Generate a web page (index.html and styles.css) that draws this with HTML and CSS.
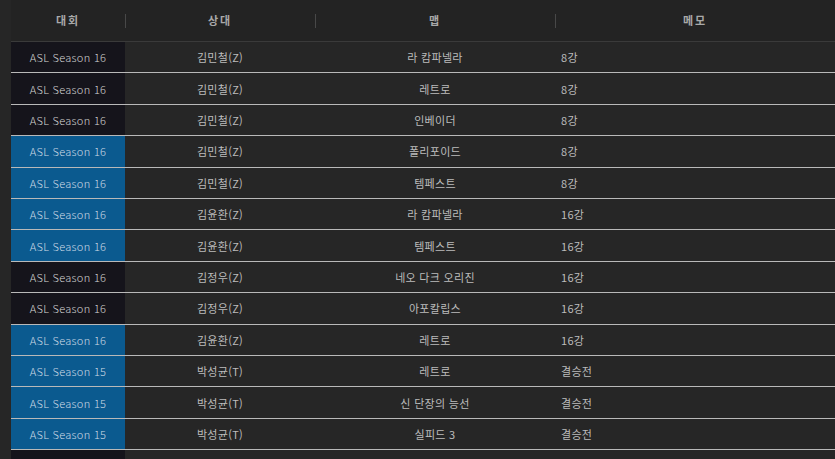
FILE: index.html
```html
<!DOCTYPE html>
<html lang="ko">
<head>
<meta charset="utf-8">
<link rel="stylesheet" href="styles.css">
</head>
<body>
<div class="wrap">
  <div class="thead">
    <div class="th">대회</div>
    <div class="th sep">상대</div>
    <div class="th sep">맵</div>
    <div class="th sep">메모</div>
  </div>
  <div class="row"><div class="c1 dark">ASL Season 16</div><div class="c">김민철(Z)</div><div class="c">라 캄파넬라</div><div class="c memo">8강</div></div>
  <div class="row"><div class="c1 dark">ASL Season 16</div><div class="c">김민철(Z)</div><div class="c">레트로</div><div class="c memo">8강</div></div>
  <div class="row"><div class="c1 dark">ASL Season 16</div><div class="c">김민철(Z)</div><div class="c">인베이더</div><div class="c memo">8강</div></div>
  <div class="row"><div class="c1 blue">ASL Season 16</div><div class="c">김민철(Z)</div><div class="c">폴리포이드</div><div class="c memo">8강</div></div>
  <div class="row"><div class="c1 blue">ASL Season 16</div><div class="c">김민철(Z)</div><div class="c">템페스트</div><div class="c memo">8강</div></div>
  <div class="row"><div class="c1 blue">ASL Season 16</div><div class="c">김윤환(Z)</div><div class="c">라 캄파넬라</div><div class="c memo">16강</div></div>
  <div class="row"><div class="c1 blue">ASL Season 16</div><div class="c">김윤환(Z)</div><div class="c">템페스트</div><div class="c memo">16강</div></div>
  <div class="row"><div class="c1 dark">ASL Season 16</div><div class="c">김정우(Z)</div><div class="c">네오 다크 오리진</div><div class="c memo">16강</div></div>
  <div class="row"><div class="c1 dark">ASL Season 16</div><div class="c">김정우(Z)</div><div class="c">아포칼립스</div><div class="c memo">16강</div></div>
  <div class="row"><div class="c1 blue">ASL Season 16</div><div class="c">김윤환(Z)</div><div class="c">레트로</div><div class="c memo">16강</div></div>
  <div class="row"><div class="c1 blue">ASL Season 15</div><div class="c">박성균(T)</div><div class="c">레트로</div><div class="c memo">결승전</div></div>
  <div class="row"><div class="c1 blue">ASL Season 15</div><div class="c">박성균(T)</div><div class="c">신 단장의 능선</div><div class="c memo">결승전</div></div>
  <div class="row"><div class="c1 blue">ASL Season 15</div><div class="c">박성균(T)</div><div class="c">실피드 3</div><div class="c memo">결승전</div></div>
  <div class="row"><div class="c1 dark"></div><div class="c"></div><div class="c"></div><div class="c memo"></div></div>
</div>
</body>
</html>
```

FILE: styles.css
```css
html, body {
  margin: 0;
  padding: 0;
  background: #262626;
  overflow: hidden;
  height: 459px;
}
body {
  font-family: "Noto Sans CJK KR", "Noto Sans", sans-serif;
  font-size: 11px;
  color: #bcbcbc;
}
.wrap {
  padding-left: 11px;
}
.thead,
.row {
  display: grid;
  grid-template-columns: 114px 190px 240px 1fr;
  box-sizing: border-box;
}
.thead {
  height: 42px;
  border-bottom: 1px solid #3a3a3a;
  background: #232323;
}
.th {
  position: relative;
  display: flex;
  align-items: center;
  justify-content: center;
  font-weight: bold;
  color: #a9a9a9;
  letter-spacing: 2px;
  padding-bottom: 2px;
}
.th.sep::before {
  content: "";
  position: absolute;
  left: 0;
  top: 14px;
  height: 14px;
  border-left: 1px solid #484848;
}
.row {
  height: 31.42px;
  border-bottom: 1px solid #b9b9b9;
  background: #262626;
}
.c1,
.c {
  display: flex;
  align-items: center;
  justify-content: center;
  white-space: nowrap;
  letter-spacing: 0.3px;
}
.c1 {
  color: #d6d6d6;
  font-weight: 300;
}
.c1.dark {
  background: #15141b;
}
.c1.blue {
  background: #0b5a8f;
  color: #cfdbe6;
}
.c.memo {
  justify-content: flex-start;
  padding-left: 6px;
}
```
